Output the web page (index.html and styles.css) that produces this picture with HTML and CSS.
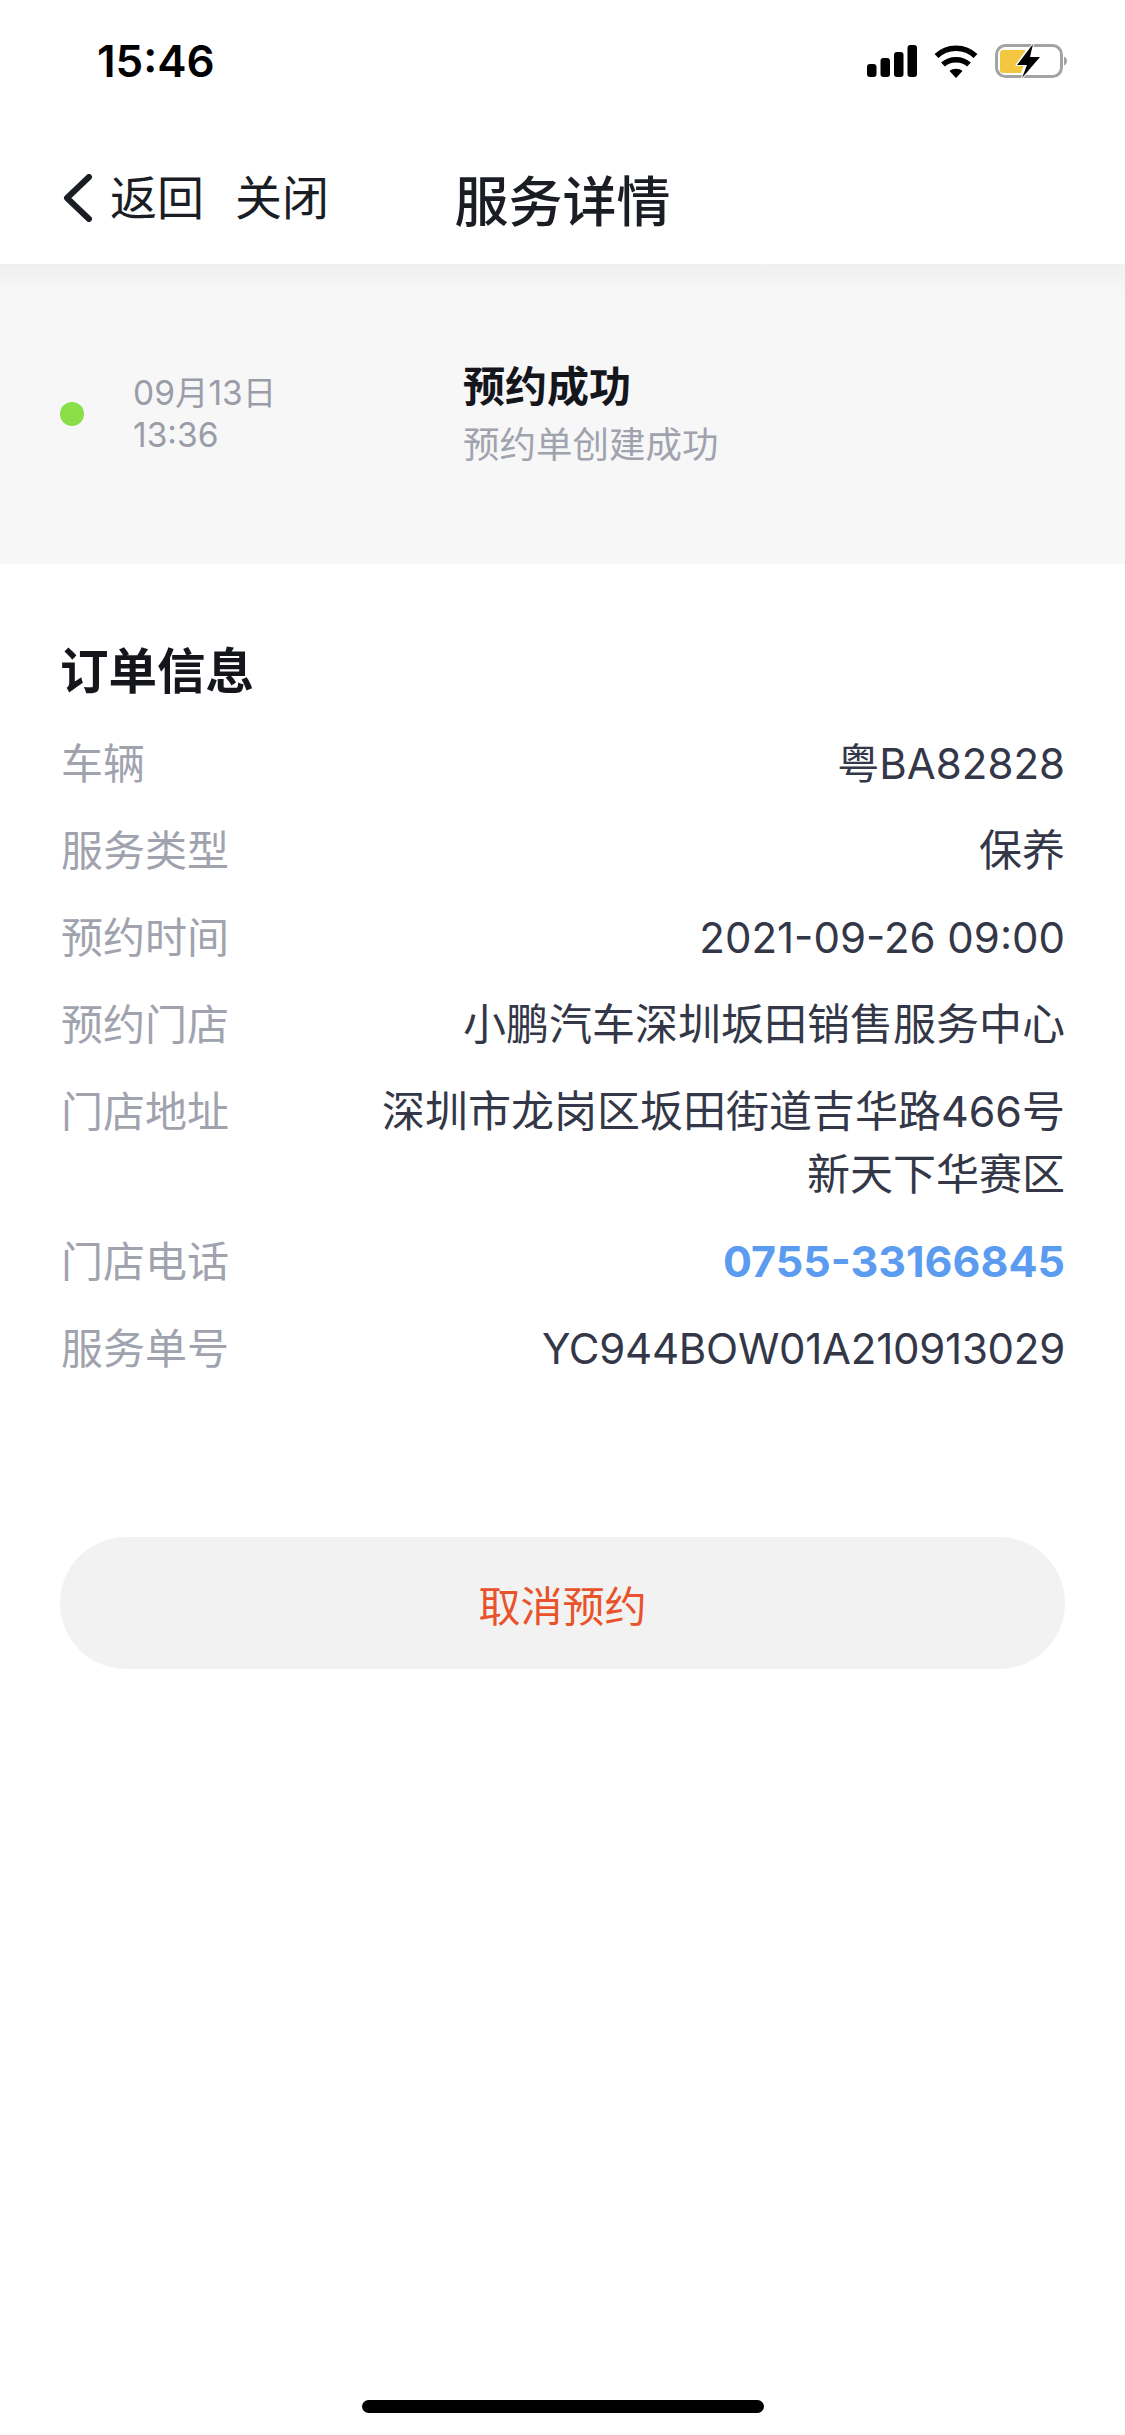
FILE: index.html
```html
<!DOCTYPE html>
<html lang="zh">
<head>
<meta charset="utf-8">
<title>服务详情</title>
<link rel="stylesheet" href="styles.css">
</head>
<body>
<div class="page">
  <header class="status">
    <span class="time">15:46</span>
    <div class="status-icons">
      <svg class="signal" width="50" height="32" viewBox="0 0 50 32"><rect x="0" y="19" width="9.500" height="13" rx="3"/><rect x="13.500" y="13" width="9.500" height="19" rx="3"/><rect x="27" y="7" width="9.500" height="25" rx="3"/><rect x="40.500" y="0" width="9.500" height="32" rx="3"/></svg>
      <svg class="wifi" width="44" height="33" viewBox="0 0 44 33"><path d="M2.500 11C13 .5 31 .5 41.500 11M9 19.500C16 13 28 13 35 19.500" fill="none" stroke="#000" stroke-width="5.500"/><path d="M15.500 26C19 23 25 23 28.500 26L22 33z"/></svg>
      <svg class="battery" width="72" height="34" viewBox="0 0 72 34"><rect x="1.500" y="1.500" width="65" height="31" rx="9" fill="#fff" stroke="#a3a3a3" stroke-width="3"/><path d="M5 9a3 3 0 0 1 3-3h23L21 20h8l-3 9H8a3 3 0 0 1-3-3z" fill="#f3c73f"/><path d="M69 12.500c2 .8 3 2.500 3 4.500s-1 3.700-3 4.500z" fill="#a3a3a3"/><path d="M38 0 22 21h10l-5 13 18-21H35z" fill="#000" stroke="#fff" stroke-width="2" paint-order="stroke"/></svg>
    </div>
  </header>
  <nav class="nav">
    <svg class="chevron" width="32" height="48" viewBox="0 0 32 48"><path d="M27 3 5 24l22 21" fill="none" stroke="#1b1d24" stroke-width="6" stroke-linecap="round" stroke-linejoin="round"/></svg>
    <span class="nav-link">返回</span>
    <span class="nav-link nav-close">关闭</span>
    <h1 class="title">服务详情</h1>
  </nav>
  <section class="timeline">
    <span class="dot"></span>
    <div class="stamp">09月13日<br>13:36</div>
    <div class="event">
      <div class="event-title">预约成功</div>
      <div class="event-sub">预约单创建成功</div>
    </div>
  </section>
  <main class="order">
    <h2 class="order-title">订单信息</h2>
    <dl class="rows">
      <div class="row"><dt>车辆</dt><dd class="latin">粤BA82828</dd></div>
      <div class="row"><dt>服务类型</dt><dd>保养</dd></div>
      <div class="row"><dt>预约时间</dt><dd class="latin">2021-09-26 09:00</dd></div>
      <div class="row"><dt>预约门店</dt><dd>小鹏汽车深圳坂田销售服务中心</dd></div>
      <div class="row"><dt>门店地址</dt><dd class="multi">深圳市龙岗区坂田街道吉华路466号<br>新天下华赛区</dd></div>
      <div class="row"><dt>门店电话</dt><dd class="phone">0755-33166845</dd></div>
      <div class="row"><dt>服务单号</dt><dd class="latin code">YC944BOW01A210913029</dd></div>
    </dl>
    <button class="cancel" type="button">取消预约</button>
  </main>
  <div class="home-bar"></div>
</div>
</body>
</html>
```
FILE: styles.css
```css
* { box-sizing: border-box; margin: 0; padding: 0; }
html, body { background: #fff; }
body {
  font-family: "Inter", "Noto Sans CJK SC", sans-serif;
  color: #333747;
}
.page {
  width: 1125px;
  height: 2435px;
  position: relative;
  overflow: hidden;
  background: #fff;
}
.status {
  height: 132px;
  padding: 38px 58px 0 97px;
  display: flex;
  justify-content: space-between;
  align-items: flex-start;
}
.time {
  font-size: 44px;
  line-height: 46px;
  font-weight: 600;
  color: #000;
}
.status-icons {
  display: flex;
  align-items: center;
  gap: 17px;
  height: 46px;
}
.nav {
  height: 132px;
  padding-left: 62px;
  display: flex;
  align-items: center;
  position: relative;
}
.chevron { flex: none; margin-right: 16px; }
.nav-link { font-size: 47px; color: #1b1d24; line-height: 60px; }
.nav-close { margin-left: 31px; }
.title {
  position: absolute;
  left: 0;
  right: 0;
  text-align: center;
  font-size: 54px;
  font-weight: 500;
  color: #1b1d24;
}
.timeline {
  height: 300px;
  background: linear-gradient(#f0f0f0 0, #f7f7f8 30px);
  display: flex;
  align-items: center;
  padding-left: 60px;
}
.dot {
  width: 24px;
  height: 24px;
  border-radius: 50%;
  background: #8adf48;
  flex: none;
}
.stamp {
  width: 330px;
  margin-left: 49px;
  font-size: 33.5px;
  line-height: 42px;
  color: #9a9da8;
}
.event { padding-top: 3px; }
.event-title { font-size: 42px; line-height: 58px; font-weight: 700; color: #14161c; }
.event-sub { font-size: 36.5px; line-height: 58px; color: #a0a3ae; }
.order { padding: 74px 60px 0; }
.order-title {
  font-size: 48.500px;
  line-height: 68px;
  font-weight: 700;
  color: #14161c;
  margin-bottom: 26px;
}
.rows { display: flex; flex-direction: column; gap: 24px; }
.row {
  display: flex;
  justify-content: space-between;
  font-size: 43px;
  line-height: 63px;
}
.row dt { color: #a0a3ae; flex: none; font-size: 42px; margin-left: 1px; }
.row dd { text-align: right; color: #333747; }
.row .latin { font-size: 42px; }
.row .code { letter-spacing: -0.25px; }
.row .phone { color: #5b9cf0; font-weight: 700; }
.cancel {
  display: block;
  width: 100%;
  height: 132px;
  margin-top: 157px;
  border: 0;
  border-radius: 66px;
  background: #f2f2f2;
  color: #e9532b;
  font: inherit;
  font-size: 42px;
}
.home-bar {
  position: absolute;
  left: 362px;
  bottom: 22px;
  width: 402px;
  height: 13px;
  border-radius: 7px;
  background: #000;
}
```
